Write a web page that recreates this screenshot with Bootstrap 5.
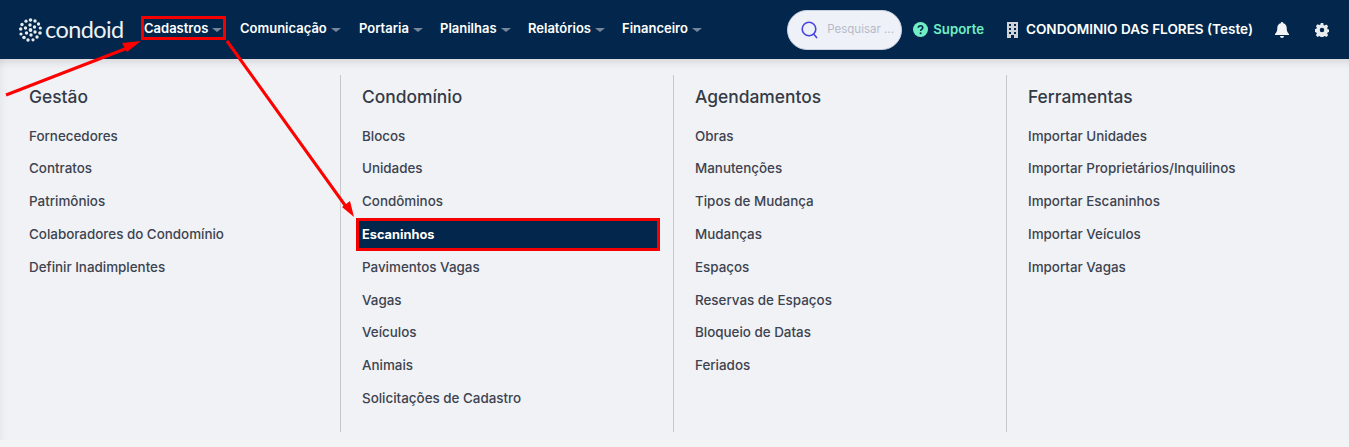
<!DOCTYPE html>
<html lang="pt">
<head>
<meta charset="utf-8">
<link href="https://cdn.jsdelivr.net/npm/bootstrap@5.3.0/dist/css/bootstrap.min.css" rel="stylesheet">
<style>
html,body{height:447px;overflow:hidden}
body{background:#f3f4f6;font-family:Inter,"Noto Sans",sans-serif;position:relative}
.topbar{height:59px;background:#03274c;padding:0 20px 0 19px;color:#fff}
.brand-box{width:123px;gap:3px}
.brand-name{font-family:Lato,sans-serif;font-weight:400;font-size:23.5px;line-height:1;color:#eef1f4;letter-spacing:-.6px}
.menu-list{margin-top:-2px}
.menu-link{font-size:13px;font-weight:600;color:#fff;text-decoration:none;display:flex;align-items:center;height:22px}
.menu-link::after{content:"";margin-left:4px;margin-top:2px;border-top:4px solid #76879b;border-left:5px solid transparent;border-right:5px solid transparent}
.m1{width:98px;padding-left:2px}.m2{width:119px}.m3{width:81px}.m4{width:88px}.m5{width:94px}
.search-pill{width:115px;height:40px;background:#eff1f8;border-radius:20px;padding-left:13px;gap:9px;border:1px solid #c8cfe0}
.search-hint{font-size:11.5px;color:#b5bac8;white-space:nowrap}
.support{color:#6ff0c4;font-size:13.2px;font-weight:600;gap:5px;margin-left:11px;margin-right:23px}
.cond-name{font-size:13.56px;font-weight:600;gap:8px;white-space:nowrap;margin-right:22px}
.bell{margin-right:26px}
.mega{margin-left:8px;padding-top:16px}
.panel-wrap{background:#f0f2f5;height:381px;box-shadow:inset 0 9px 8px -6px rgba(0,0,0,.12),inset 9px 0 8px -6px rgba(0,0,0,.04)}
.mega-col{width:333px;height:357px;padding-left:4px;padding-right:15px;border-right:1px solid #c6c8cc}
.mega-col:last-child{border-right:0}
.mega-title{font-size:17.4px;font-weight:500;color:#343a46;margin:0 0 .7px 17px;line-height:44px;height:44px}
.mega-item{display:block;height:32.8px;line-height:32.8px;font-size:13.4px;font-weight:500;color:#3d4350;text-decoration:none;padding-left:17px}
.mega-item.is-on{background:#03274c;color:#fff;font-weight:700;font-size:12.8px;box-shadow:0 0 0 3px #f50000;margin-left:14px;padding-left:3px;height:27px;line-height:27px;margin-top:3px;margin-bottom:2.8px;margin-right:1px}
.annot{position:absolute;left:0;top:0;width:1349px;height:447px;pointer-events:none}
</style>
</head>
<body>
<nav class="topbar d-flex align-items-center">
  <div class="brand-box d-flex align-items-center">
    <svg width="23" height="24" viewBox="0 0 23 24" fill="#e9ecef" aria-hidden="true"><g><circle cx="11.500" cy="2" r="1.800"/><circle cx="16" cy="3" r="1.700"/><circle cx="19.500" cy="6" r="1.700"/><circle cx="21.300" cy="10" r="1.600"/><circle cx="21" cy="15" r="1.800"/><circle cx="18" cy="19" r="1.700"/><circle cx="14" cy="21.800" r="1.600"/><circle cx="9" cy="22" r="1.700"/><circle cx="5" cy="19.500" r="1.800"/><circle cx="2" cy="16" r="1.600"/><circle cx="1.700" cy="11" r="1.700"/><circle cx="3" cy="6.500" r="1.700"/><circle cx="7" cy="3.200" r="1.600"/><circle cx="11" cy="7" r="1.700"/><circle cx="15.500" cy="9" r="1.700"/><circle cx="16" cy="14" r="1.700"/><circle cx="12" cy="17" r="1.700"/><circle cx="7.500" cy="15" r="1.700"/><circle cx="6.500" cy="10" r="1.700"/><circle cx="11.500" cy="12" r="1.900"/></g></svg>
    <span class="brand-name">condoid</span>
  </div>
  <div class="menu-list d-flex align-items-center">
    <a class="menu-link m1" href="#">Cadastros</a>
    <a class="menu-link m2" href="#">Comunicação</a>
    <a class="menu-link m3" href="#">Portaria</a>
    <a class="menu-link m4" href="#">Planilhas</a>
    <a class="menu-link m5" href="#">Relatórios</a>
    <a class="menu-link" href="#">Financeiro</a>
  </div>
  <div class="ms-auto d-flex align-items-center">
    <div class="search-pill d-flex align-items-center">
      <svg width="17" height="18" viewBox="0 0 17 18" fill="none" stroke="#4a45de" stroke-width="1.600" aria-hidden="true"><circle cx="8" cy="8" r="6.800"/><path d="M12.600 13l3 3.600" stroke-linecap="round"/></svg>
      <span class="search-hint">Pesquisar ...</span>
    </div>
    <div class="support d-flex align-items-center">
      <svg width="15" height="15" viewBox="0 0 16 16" aria-hidden="true"><circle cx="8" cy="8" r="8" fill="#6ff0c4"/><path d="M5.600 6.200c0-1.400 1.100-2.200 2.400-2.200s2.400.8 2.400 2.100c0 1.900-2.300 1.800-2.300 3.600" fill="none" stroke="#03274c" stroke-width="1.700"/><circle cx="8.100" cy="12" r="1.100" fill="#03274c"/></svg>
      <span>Suporte</span>
    </div>
    <div class="cond-name d-flex align-items-center">
      <svg width="11" height="16" viewBox="0 0 11 16" aria-hidden="true"><path fill="#cfd3d8" fill-rule="evenodd" d="M0 0h11v16H7v-3H4v3H0zM2 2v2h2V2zm5 0v2h2V2zM2 6v2h2V6zm5 0v2h2V6zM2 10v2h2v-2zm5 0v2h2v-2z"/></svg>
      <span>CONDOMINIO DAS FLORES (Teste)</span>
    </div>
    <svg class="bell" width="14" height="16" viewBox="0 0 14 16" fill="#f2f4f6" aria-hidden="true"><path d="M7 0a1.200 1.200 0 0 0-1.200 1.300C3.500 1.800 2.300 3.700 2.300 6c0 3.500-1 4.600-2.300 6v1h14v-1c-1.300-1.400-2.300-2.500-2.300-6 0-2.300-1.200-4.200-3.500-4.700A1.200 1.200 0 0 0 7 0zM5 14a2 2 0 0 0 4 0z"/></svg>
    <svg width="14" height="14" viewBox="0 0 16 16" fill="#e9ecef" aria-hidden="true"><path fill-rule="evenodd" d="M6.600 0h2.800l.4 2.200 1.200.6 2-1 2 2-1.100 1.900.6 1.300 2 .5v2.800l-2.100.5-.5 1.200 1.100 1.900-2 2-1.900-1.100-1.300.5-.4 2.200H6.600l-.5-2.200-1.200-.5-1.900 1.100-2-2 1.100-1.900-.6-1.200-2-.5V7l2.100-.5.500-1.300-1.100-1.900 2-2 1.900 1.100 1.300-.6zM8 5.400a2.600 2.600 0 1 0 0 5.200 2.600 2.600 0 0 0 0-5.200z"/></svg>
  </div>
</nav>
<div class="panel-wrap">
  <div class="mega d-flex">
    <div class="mega-col">
      <h5 class="mega-title">Gestão</h5>
      <a class="mega-item" href="#">Fornecedores</a>
      <a class="mega-item" href="#">Contratos</a>
      <a class="mega-item" href="#">Patrimônios</a>
      <a class="mega-item" href="#">Colaboradores do Condomínio</a>
      <a class="mega-item" href="#">Definir Inadimplentes</a>
    </div>
    <div class="mega-col">
      <h5 class="mega-title">Condomínio</h5>
      <a class="mega-item" href="#">Blocos</a>
      <a class="mega-item" href="#">Unidades</a>
      <a class="mega-item" href="#">Condôminos</a>
      <a class="mega-item is-on" href="#">Escaninhos</a>
      <a class="mega-item" href="#">Pavimentos Vagas</a>
      <a class="mega-item" href="#">Vagas</a>
      <a class="mega-item" href="#">Veículos</a>
      <a class="mega-item" href="#">Animais</a>
      <a class="mega-item" href="#">Solicitações de Cadastro</a>
    </div>
    <div class="mega-col">
      <h5 class="mega-title">Agendamentos</h5>
      <a class="mega-item" href="#">Obras</a>
      <a class="mega-item" href="#">Manutenções</a>
      <a class="mega-item" href="#">Tipos de Mudança</a>
      <a class="mega-item" href="#">Mudanças</a>
      <a class="mega-item" href="#">Espaços</a>
      <a class="mega-item" href="#">Reservas de Espaços</a>
      <a class="mega-item" href="#">Bloqueio de Datas</a>
      <a class="mega-item" href="#">Feriados</a>
    </div>
    <div class="mega-col">
      <h5 class="mega-title">Ferramentas</h5>
      <a class="mega-item" href="#">Importar Unidades</a>
      <a class="mega-item" href="#">Importar Proprietários/Inquilinos</a>
      <a class="mega-item" href="#">Importar Escaninhos</a>
      <a class="mega-item" href="#">Importar Veículos</a>
      <a class="mega-item" href="#">Importar Vagas</a>
    </div>
  </div>
</div>
<svg class="annot" viewBox="0 0 1349 447" aria-hidden="true">
  <rect x="142.500" y="17.500" width="82" height="21" fill="none" stroke="#f50000" stroke-width="3"/>
  <path d="M6 95L130 47" stroke="#f00" stroke-width="3" fill="none"/>
  <path d="M141 41L127 52 122 43z" fill="#f00"/>
  <path d="M227 41L347 208" stroke="#f00" stroke-width="3" fill="none"/>
  <path d="M354 217L342 207 350 201z" fill="#f00"/>
</svg>
</body>
</html>
